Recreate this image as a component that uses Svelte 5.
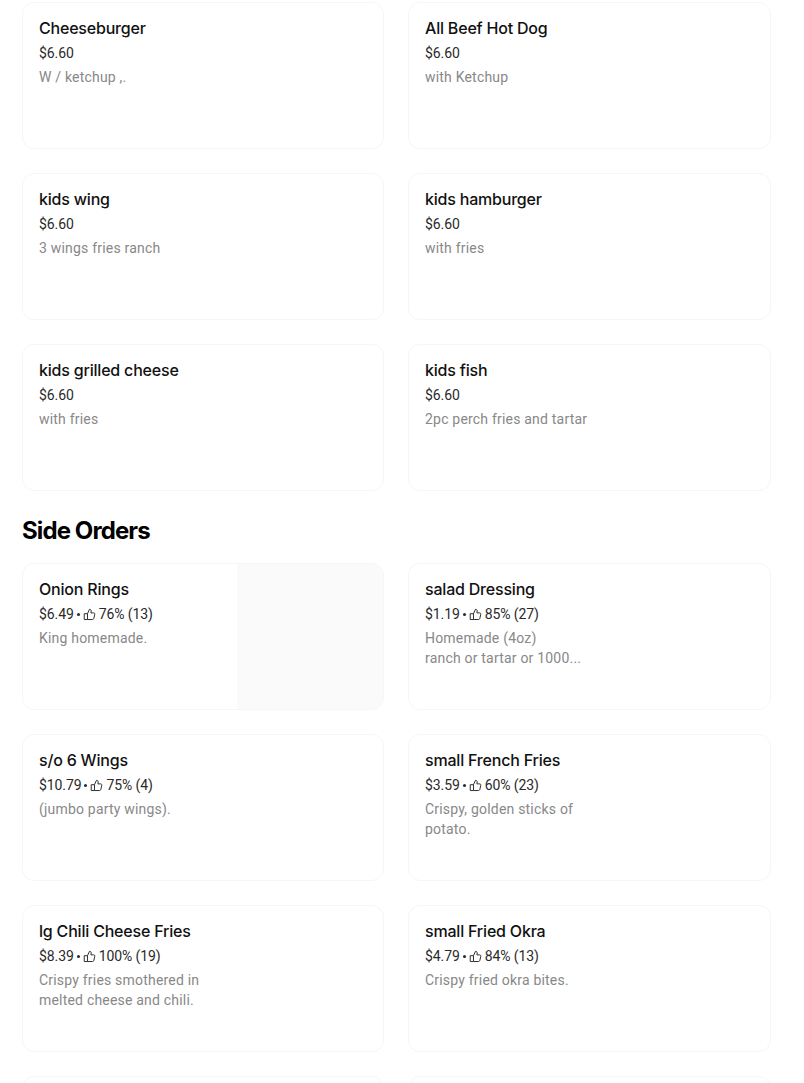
<script>
  const kids = [
    { name: "Cheeseburger", price: "$6.60", desc: "W / ketchup ,." },
    { name: "All Beef Hot Dog", price: "$6.60", desc: "with Ketchup" },
    { name: "kids wing", price: "$6.60", desc: "3 wings fries ranch" },
    { name: "kids hamburger", price: "$6.60", desc: "with fries" },
    { name: "kids grilled cheese", price: "$6.60", desc: "with fries" },
    { name: "kids fish", price: "$6.60", desc: "2pc perch fries and tartar" },
  ];
  const sides = [
    { name: "Onion Rings", price: "$6.49", rating: "76% (13)", desc: "King homemade.", photo: true },
    { name: "salad Dressing", price: "$1.19", rating: "85% (27)", desc: "Homemade (4oz)\nranch or tartar or 1000..." },
    { name: "s/o 6 Wings", price: "$10.79", rating: "75% (4)", desc: "(jumbo party wings)." },
    { name: "small French Fries", price: "$3.59", rating: "60% (23)", desc: "Crispy, golden sticks of\npotato." },
    { name: "lg Chili Cheese Fries", price: "$8.39", rating: "100% (19)", desc: "Crispy fries smothered in\nmelted cheese and chili." },
    { name: "small Fried Okra", price: "$4.79", rating: "84% (13)", desc: "Crispy fried okra bites." },
    { name: "", price: "", desc: "" },
    { name: "", price: "", desc: "" },
  ];
</script>

{#snippet card(item)}
  <div class="card">
    <div class="info">
      {#if item.name}
        <div class="name">{item.name}</div>
        <div class="meta">
          <span>{item.price}</span>
          {#if item.rating}
            <span class="dot"></span>
            <svg class="thumb" viewBox="0 0 16 16" width="13" height="13" fill="none" stroke="currentColor" stroke-width="1.2">
              <path d="M5.5 7 8 1.6c1.3 0 2.1.9 2.1 2L9.7 6h3.4c1 0 1.6.8 1.4 1.7l-1.1 5c-.2.9-.9 1.5-1.8 1.5H5.5z" />
              <path d="M5.5 7H1.5v7.2h4" />
            </svg>
            <span>{item.rating}</span>
          {/if}
        </div>
        <div class="desc">{item.desc}</div>
      {/if}
    </div>
    {#if item.photo}
      <div class="photo"></div>
    {/if}
  </div>
{/snippet}

<div class="page">
  <div class="grid">
    {#each kids as item}
      {@render card(item)}
    {/each}
  </div>
  <h2>Side Orders</h2>
  <div class="grid">
    {#each sides as item}
      {@render card(item)}
    {/each}
  </div>
</div>

<style>
  :global(body) {
    overflow: hidden;
    background: #fff;
  }

  .page {
    height: 1083px;
    overflow: hidden;
    box-sizing: border-box;
    padding: 2px 33px 0 22px;
    font-family: Roboto, "Liberation Sans", sans-serif;
    color: #000;
  }

  .grid {
    display: grid;
    grid-template-columns: 362px 363px;
    column-gap: 24px;
    row-gap: 24px;
  }

  h2 {
    margin: 0;
    height: 72px;
    padding-top: 24px;
    box-sizing: border-box;
    font-family: Inter, sans-serif;
    font-size: 24px;
    line-height: 32px;
    font-weight: 700;
    letter-spacing: -0.9px;
  }

  .card {
    display: flex;
    justify-content: space-between;
    height: 147px;
    box-sizing: border-box;
    border: 1px solid #f6f6f6;
    border-radius: 12px;
    overflow: hidden;
  }

  .info {
    padding: 15px 16px 0;
    min-width: 0;
  }

  .name {
    font-family: Inter, sans-serif;
    font-size: 16px;
    line-height: 20px;
    font-weight: 500;
    letter-spacing: -0.2px;
    color: #111;
  }

  .meta {
    display: flex;
    align-items: center;
    gap: 3px;
    margin-top: 5px;
    font-size: 14px;
    line-height: 20px;
    letter-spacing: -0.1px;
    color: #2a2a2a;
  }

  .dot {
    width: 3px;
    height: 3px;
    border-radius: 50%;
    background: currentColor;
  }

  .thumb {
    flex: none;
  }

  .desc {
    margin-top: 4px;
    font-size: 14px;
    line-height: 20px;
    letter-spacing: 0.2px;
    color: #888;
    white-space: pre-line;
  }

  .photo {
    width: 146px;
    flex: none;
    background: #fafafa;
  }
</style>
